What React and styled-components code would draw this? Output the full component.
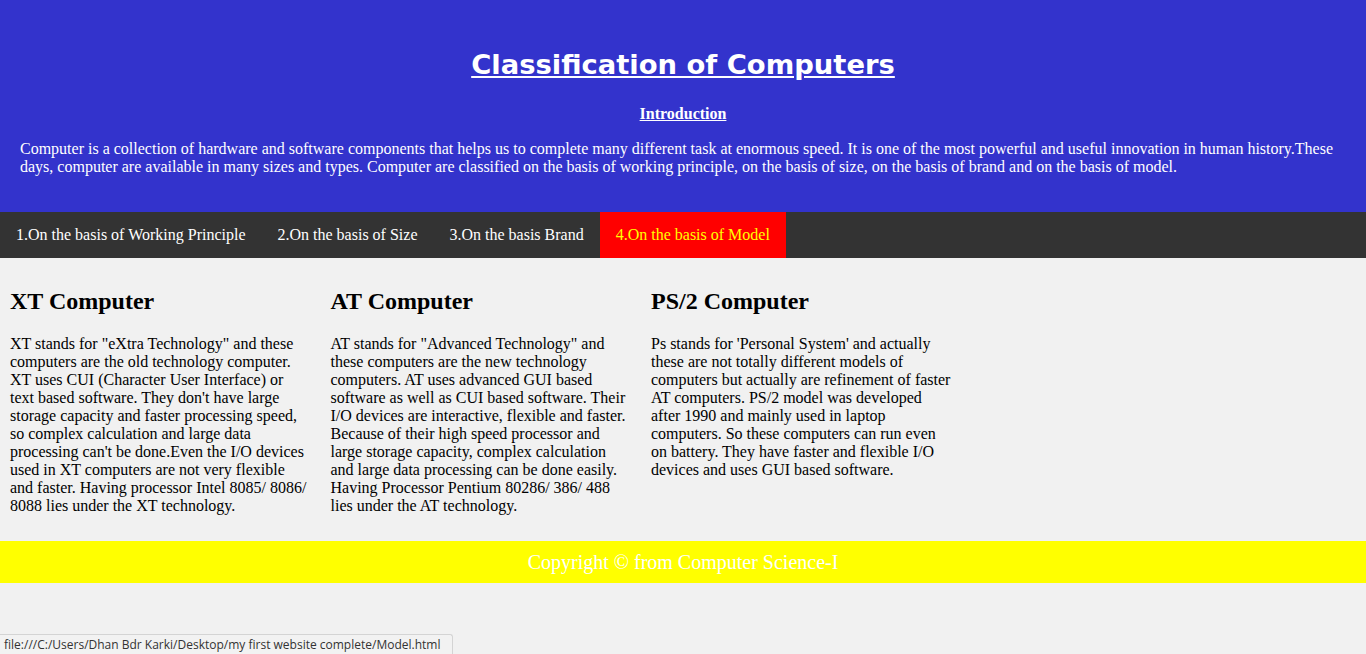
import React from "react";
import styled, { createGlobalStyle } from "styled-components";

const GlobalStyle = createGlobalStyle`
  html, body {
    margin: 0;
    padding: 0;
    background: #f1f1f1;
    font-family: "Liberation Serif", "Times New Roman", serif;
  }
`;

const models = [
  {
    title: "XT Computer",
    text: `XT stands for "eXtra Technology" and these computers are the old technology computer. XT uses CUI (Character User Interface) or text based software. They don't have large storage capacity and faster processing speed, so complex calculation and large data processing can't be done.Even the I/O devices used in XT computers are not very flexible and faster. Having processor Intel 8085/ 8086/ 8088 lies under the XT technology.`,
  },
  {
    title: "AT Computer",
    text: `AT stands for "Advanced Technology" and these computers are the new technology computers. AT uses advanced GUI based software as well as CUI based software. Their I/O devices are interactive, flexible and faster. Because of their high speed processor and large storage capacity, complex calculation and large data processing can be done easily. Having Processor Pentium 80286/ 386/ 488 lies under the AT technology.`,
  },
  {
    title: "PS/2 Computer",
    text: `Ps stands for 'Personal System' and actually these are not totally different models of computers but actually are refinement of faster AT computers. PS/2 model was developed after 1990 and mainly used in laptop computers. So these computers can run even on battery. They have faster and flexible I/O devices and uses GUI based software.`,
  },
];

const navItems = [
  "1.On the basis of Working Principle",
  "2.On the basis of Size",
  "3.On the basis Brand",
  "4.On the basis of Model",
];

const App = () => {
  return (
    <Page>
      <GlobalStyle />
      <Header>
        <Title>Classification of Computers</Title>
        <SubTitle>Introduction</SubTitle>
        <Intro>
          Computer is a collection of hardware and software components that
          helps us to complete many different task at enormous speed. It is one
          of the most powerful and useful innovation in human history.These
          days, computer are available in many sizes and types. Computer are
          classified on the basis of working principle, on the basis of size,
          on the basis of brand and on the basis of model.
        </Intro>
      </Header>
      <Nav>
        {navItems.map((item, i) => (
          <NavLink key={item} href="#" $active={i === 3}>
            {item}
          </NavLink>
        ))}
      </Nav>
      <Row>
        {models.map((m) => (
          <Column key={m.title}>
            <ColTitle>{m.title}</ColTitle>
            <ColText>{m.text}</ColText>
          </Column>
        ))}
      </Row>
      <Footer>Copyright © from Computer Science-I</Footer>
      <StatusBar>
        file:///C:/Users/Dhan Bdr Karki/Desktop/my first website complete/Model.html
      </StatusBar>
    </Page>
  );
};

const Page = styled.div`
  min-height: 654px;
  background: #f1f1f1;
`;

const Header = styled.header`
  background: #3333cc;
  color: #fff;
  padding: 43px 20px 36px;
  text-align: center;
`;

const Title = styled.h1`
  margin: 0;
  font-family: "Comic Sans MS", "DejaVu Sans", sans-serif;
  font-size: 27.4px;
  line-height: 43px;
  font-weight: bold;
  text-decoration: underline;
`;

const SubTitle = styled.h4`
  margin: 19px 0 0;
  font-size: 16px;
  line-height: 18px;
  font-weight: bold;
  text-decoration: underline;
`;

const Intro = styled.p`
  margin: 17px 0 0;
  font-size: 16px;
  line-height: 18px;
  text-align: left;
`;

const Nav = styled.nav`
  display: flex;
  background: #333;
`;

const NavLink = styled.a`
  display: block;
  padding: 14px 16px;
  font-size: 16px;
  line-height: 18px;
  text-decoration: none;
  color: ${(p) => (p.$active ? "#ffff00" : "#fff")};
  background: ${(p) => (p.$active ? "#ff0000" : "transparent")};
`;

const Row = styled.section`
  display: flex;
  padding: 10px 0 26px;
`;

const Column = styled.div`
  width: 300px;
  padding: 0 10px;
  margin-right: 0.5px;
`;

const ColTitle = styled.h2`
  margin: 19px 0 0;
  font-size: 24px;
  line-height: 28px;
  font-weight: bold;
`;

const ColText = styled.p`
  margin: 20px 0 0;
  font-size: 16px;
  line-height: 18px;
`;

const Footer = styled.footer`
  background: #ffff00;
  color: #fff;
  text-align: center;
  font-size: 20px;
  line-height: 22px;
  padding: 10px 0;
`;

const StatusBar = styled.div`
  position: fixed;
  left: 0;
  bottom: 0;
  width: 448px;
  height: 19px;
  padding-left: 4px;
  background: #f2f2f2;
  border-top: 1px solid #d4d4d4;
  border-right: 1px solid #d4d4d4;
  border-top-right-radius: 3px;
  font-family: "Open Sans", "DejaVu Sans", sans-serif;
  font-size: 12px;
  line-height: 20px;
  color: #333;
  white-space: nowrap;
  overflow: hidden;
`;

export default App;
